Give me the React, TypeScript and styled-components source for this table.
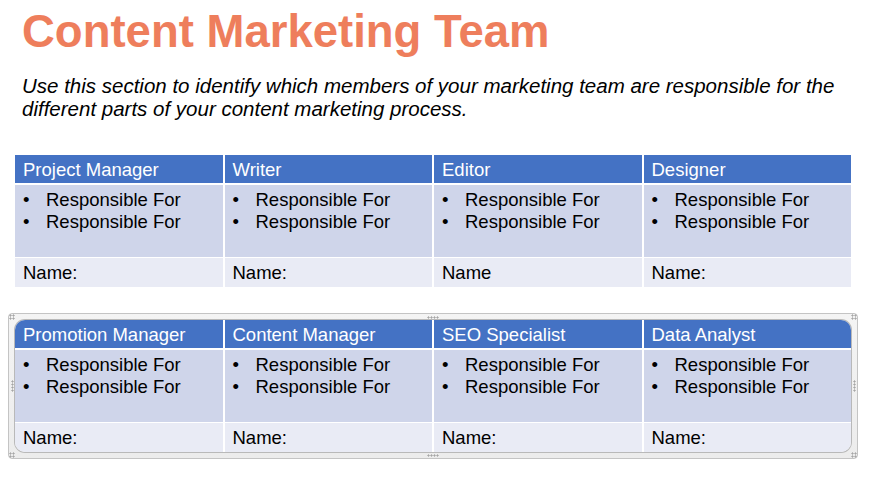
import styled, { createGlobalStyle } from 'styled-components';

const GlobalStyle = createGlobalStyle`
  html, body {
    margin: 0;
    padding: 0;
    background: #ffffff;
  }
  body {
    font-family: "Liberation Sans", Arial, sans-serif;
    color: #000;
  }
`;

// --- Styled Components ---
const Page = styled.main`
  display: flex;
  flex-direction: column;
  align-items: flex-start;
  width: 877px;
  height: 498px;
  padding: 5px 0 0 8px;
  box-sizing: border-box;
  overflow: hidden;
`;

const Header = styled.header`
  display: flex;
  flex-direction: column;
  gap: 15px;
  padding-left: 14px;
`;

const Title = styled.h1`
  margin: 0;
  font-size: 45.5px;
  line-height: 54px;
  font-weight: bold;
  color: #ee7e5c;
`;

const Intro = styled.p`
  margin: 0;
  width: 830px;
  font-size: 20.5px;
  line-height: 23px;
  font-style: italic;
`;

const Table = styled.div<{ $rounded?: boolean }>`
  display: grid;
  grid-template-columns: repeat(4, 1fr);
  column-gap: 2px;
  row-gap: 1px;
  width: 836px;
  background: #ffffff;
  ${({ $rounded }) =>
    $rounded &&
    `
    border-radius: 10px;
    overflow: hidden;
    box-shadow: 0 0 0 1px #b9b9b9;
  `}
`;

const PlainTable = styled(Table)`
  margin: 35px 0 0 7px;
`;

const HeadCell = styled.div`
  background: #4472c4;
  color: #ffffff;
  font-size: 18.5px;
  line-height: 22px;
  padding: 4px 8px 2px;
  border-bottom: 1px solid #ffffff;
  white-space: nowrap;
`;

const BodyCell = styled.ul`
  margin: 0;
  list-style: none;
  background: #cfd5ea;
  height: 72px;
  box-sizing: border-box;
  padding: 4px 8px 0;
  font-size: 18.5px;
  line-height: 22px;
`;

const Item = styled.li`
  display: flex;
  white-space: nowrap;

  &::before {
    content: '•';
    width: 23px;
    flex: none;
  }
`;

const NameCell = styled.div`
  background: #e9ebf5;
  font-size: 18.5px;
  line-height: 22px;
  padding: 4px 8px 3px;
`;

// selection frame around the second table: a 3x3 grid whose edge cells hold the grips
const Frame = styled.div`
  display: grid;
  grid-template-columns: 6px 836px 6px;
  grid-template-rows: 6px auto 6px;
  margin-top: 26px;
  border: 1px solid #c4c4c4;
  border-radius: 4px;
  background: linear-gradient(180deg, #f4f4f4 0%, #ececec 100%);
`;

const GripCell = styled.div`
  display: flex;
  align-items: center;
  justify-content: center;
`;

const Grip = styled.span<{ $w: number; $h: number }>`
  width: ${({ $w }) => $w}px;
  height: ${({ $h }) => $h}px;
  background-image: radial-gradient(circle, #a6a6a6 0.9px, transparent 1.2px);
  background-size: 3px 3px;
`;

interface Role {
  title: string;
  name: string;
}

const firstRow: Role[] = [
  { title: 'Project Manager', name: 'Name:' },
  { title: 'Writer', name: 'Name:' },
  { title: 'Editor', name: 'Name' },
  { title: 'Designer', name: 'Name:' },
];

const secondRow: Role[] = [
  { title: 'Promotion Manager', name: 'Name:' },
  { title: 'Content Manager', name: 'Name:' },
  { title: 'SEO Specialist', name: 'Name:' },
  { title: 'Data Analyst', name: 'Name:' },
];

function Cells({ roles }: { roles: Role[] }) {
  return (
    <>
      {roles.map((r) => (
        <HeadCell key={'h' + r.title}>{r.title}</HeadCell>
      ))}
      {roles.map((r) => (
        <BodyCell key={'b' + r.title}>
          <Item>Responsible For</Item>
          <Item>Responsible For</Item>
        </BodyCell>
      ))}
      {roles.map((r) => (
        <NameCell key={'n' + r.title}>{r.name}</NameCell>
      ))}
    </>
  );
}

const corner = <Grip $w={6} $h={6} />;

// --- Component ---
export default function App() {
  return (
    <>
      <GlobalStyle />
      <Page>
        <Header>
          <Title>Content Marketing Team</Title>
          <Intro>
            Use this section to identify which members of your marketing team are responsible for the
            different parts of your content marketing process.
          </Intro>
        </Header>

        <PlainTable>
          <Cells roles={firstRow} />
        </PlainTable>

        <Frame>
          <GripCell>{corner}</GripCell>
          <GripCell><Grip $w={12} $h={3} /></GripCell>
          <GripCell>{corner}</GripCell>

          <GripCell><Grip $w={3} $h={12} /></GripCell>
          <Table $rounded>
            <Cells roles={secondRow} />
          </Table>
          <GripCell><Grip $w={3} $h={12} /></GripCell>

          <GripCell>{corner}</GripCell>
          <GripCell><Grip $w={12} $h={3} /></GripCell>
          <GripCell>{corner}</GripCell>
        </Frame>
      </Page>
    </>
  );
}
